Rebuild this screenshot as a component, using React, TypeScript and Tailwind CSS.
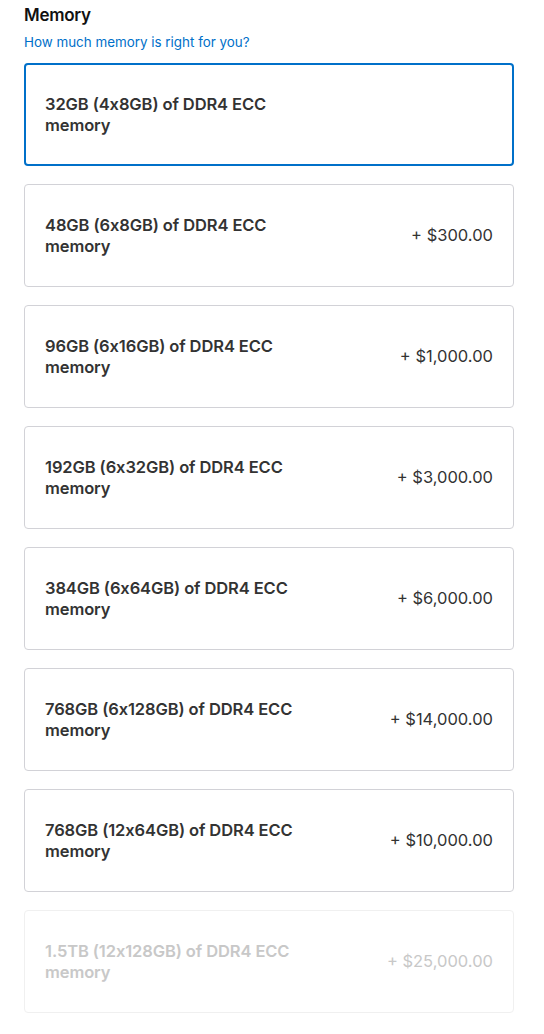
import React from "react";

const options = [
  { label: "32GB (4x8GB) of DDR4 ECC memory", price: "", selected: true },
  { label: "48GB (6x8GB) of DDR4 ECC memory", price: "+ $300.00" },
  { label: "96GB (6x16GB) of DDR4 ECC memory", price: "+ $1,000.00" },
  { label: "192GB (6x32GB) of DDR4 ECC memory", price: "+ $3,000.00" },
  { label: "384GB (6x64GB) of DDR4 ECC memory", price: "+ $6,000.00" },
  { label: "768GB (6x128GB) of DDR4 ECC memory", price: "+ $14,000.00" },
  { label: "768GB (12x64GB) of DDR4 ECC memory", price: "+ $10,000.00" },
  { label: "1.5TB (12x128GB) of DDR4 ECC memory", price: "+ $25,000.00", disabled: true },
];

export default function App() {
  return (
    <div className="bg-white min-h-[1034px] pl-6 pr-[30px] pt-[4px]" style={{ fontFamily: 'Inter, "Noto Sans", sans-serif' }}>
      <h2 className="text-[17px] font-semibold text-[#111] leading-[22px] tracking-[-0.3px]">Memory</h2>
      <a className="block mt-[8px] text-[13.4px] leading-[16px] text-[#0070c9]">How much memory is right for you?</a>
      <div className="mt-[13px] flex flex-col gap-[18px]">
        {options.map((o, i) => (
          <div
            key={i}
            className={
              "flex items-center justify-between rounded-[4px] h-[103px] " +
              (o.selected
                ? "border-2 border-[#0070c9] px-[19px]"
                : o.disabled
                ? "border border-[#f0f0f0] px-5"
                : "border border-[#d2d2d7] px-5")
            }
          >
            <div
              className={
                "w-[280px] text-[16.5px] font-semibold leading-[21px] tracking-[-0.1px] " +
                (o.disabled ? "text-[#c8c8c8]" : "text-[#333]")
              }
            >
              {o.label}
            </div>
            {o.price && (
              <div className={"text-[16.5px] " + (o.disabled ? "text-[#c8c8c8]" : "text-[#333]")}>{o.price}</div>
            )}
          </div>
        ))}
      </div>
    </div>
  );
}
